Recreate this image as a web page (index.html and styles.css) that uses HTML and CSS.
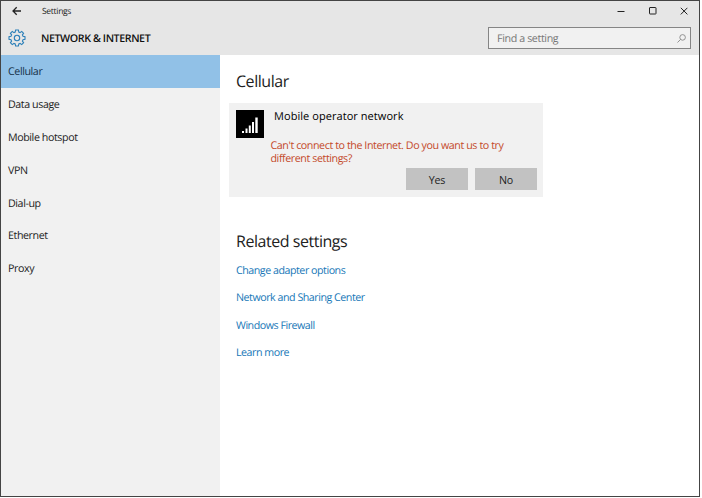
FILE: index.html
```html
<!DOCTYPE html>
<html lang="en">
<head>
<meta charset="utf-8">
<title>Settings</title>
<link rel="stylesheet" href="styles.css">
</head>
<body>
<div class="window">
  <header class="header">
    <div class="titlebar">
      <svg class="back" width="10" height="10" viewBox="0 0 10 10"><path d="M9 5H1M4.700 1.200L1 5l3.700 3.800"/></svg>
      <span class="app-name">Settings</span>
      <div class="controls">
        <svg width="8" height="8" viewBox="0 0 8 8"><path d="M.5 4.500h7"/></svg>
        <svg width="8" height="8" viewBox="0 0 8 8"><rect x=".5" y=".5" width="6.500" height="6.500" rx=".5"/></svg>
        <svg width="8" height="8" viewBox="0 0 8 8"><path d="M.8.8l6.600 6.600M7.400.8L.8 7.400"/></svg>
      </div>
    </div>
    <div class="heading">
      <svg class="gear" width="18" height="18" viewBox="-9 -9 18 18"><path d="M-1.4-8H1.4L1.8-6 3.1-5.4 4.7-6.6 6.6-4.7 5.4-3.1 6-1.8 8-1.4V1.4L6 1.8 5.4 3.1 6.6 4.7 4.7 6.6 3.1 5.4 1.8 6 1.4 8H-1.4L-1.8 6-3.1 5.4-4.7 6.6-6.6 4.7-5.4 3.1-6 1.8-8 1.4V-1.4L-6-1.8-5.4-3.1-6.6-4.7-4.7-6.6-3.1-5.4-1.8-6Z"/><circle r="2.7"/></svg>
      <h1>NETWORK &amp; INTERNET</h1>
      <div class="search">
        <span>Find a setting</span>
        <svg width="9" height="9" viewBox="0 0 9 9"><circle cx="5.6" cy="3.4" r="2.8"/><path d="M3.600 5.400L.5 8.500"/></svg>
      </div>
    </div>
  </header>
  <div class="body">
    <nav class="sidebar">
      <a class="item selected">Cellular</a>
      <a class="item">Data usage</a>
      <a class="item">Mobile hotspot</a>
      <a class="item">VPN</a>
      <a class="item">Dial-up</a>
      <a class="item">Ethernet</a>
      <a class="item">Proxy</a>
    </nav>
    <main class="content">
      <h2>Cellular</h2>
      <section class="card">
        <svg class="signal" width="28" height="28" viewBox="0 0 28 28"><rect width="28" height="28"/><path d="M6 21h2v2H6zM9.500 18.500h2V23h-2zM12.800 15.500h2V23h-2zM16 12h2v11h-2zM19.300 7.500h2.400V23h-2.400z"/></svg>
        <div class="info">
          <div class="network">Mobile operator network</div>
          <p class="warning">Can't connect to the Internet. Do you want us to try<br>different settings?</p>
          <div class="buttons"><button>Yes</button><button>No</button></div>
        </div>
      </section>
      <h2 class="related">Related settings</h2>
      <div class="links">
        <a>Change adapter options</a>
        <a>Network and Sharing Center</a>
        <a>Windows Firewall</a>
        <a>Learn more</a>
      </div>
    </main>
  </div>
</div>
</body>
</html>
```
FILE: styles.css
```css
* { box-sizing: border-box; }
body { margin: 0; background: #fff; font-family: "Open Sans", "Noto Sans", sans-serif; font-size: 10.700px; letter-spacing: -.45px; color: #222; text-rendering: geometricPrecision; }
svg { flex: none; fill: none; stroke: #222; }
h1, h2, p { margin: 0; }
.window { width: 700px; height: 497px; border: 1px solid #444; display: flex; flex-direction: column; background: #fff; }
.header { height: 54px; flex: none; background: #e6e6e6; }
.titlebar { height: 20px; display: flex; align-items: center; padding: 0 11px; }
.back { stroke-width: 1.3; }
.app-name { font-size: 8.500px; letter-spacing: -.3px; line-height: 12px; margin: 2px 0 0 20px; }
.controls { display: flex; gap: 23.500px; margin-left: auto; }
.heading { height: 34px; display: flex; align-items: center; padding: 0 8px 0 7px; }
.gear { stroke: #2b7fb8; stroke-width: 1.1; }
h1 { margin: 2px 0 0 15px; font-size: 10.700px; font-weight: 600; line-height: 16px; letter-spacing: -.42px; color: #111; }
.search { width: 203px; height: 22px; margin-left: auto; border: 1px solid #858585; background: #f1f1f1; display: flex; align-items: center; justify-content: space-between; padding: 0 4px 0 8px; color: #777; }
.search span { line-height: 18px; margin-top: 1px; letter-spacing: -.38px; }
.search svg { stroke: #888; stroke-width: .9; }
.body { display: flex; flex: 1; min-height: 0; }
.sidebar { width: 219px; flex: none; background: #f1f1f1; display: flex; flex-direction: column; }
.item { height: 32.900px; line-height: 35px; padding-left: 7px; flex: none; letter-spacing: -.42px; }
.selected { background: #91c1e7; color: #17324a; }
.content { flex: 1; padding: 16px 0 0 9px; }
h2 { margin-left: 7px; font-size: 16px; line-height: 20px; font-weight: 400; letter-spacing: -.46px; color: #222; }
.card { width: 314px; height: 94px; margin-top: 12px; padding: 7px 6px 7px 7px; background: #f1f1f1; display: flex; }
.signal rect { fill: #000; stroke: none; }
.signal path { fill: #fff; stroke: none; }
.info { flex: 1; padding-left: 6.500px; }
.network { margin-left: 3.500px; font-size: 11px; letter-spacing: .06px; line-height: 13px; color: #000; }
.warning { margin-top: 17px; line-height: 13px; letter-spacing: -.42px; color: #c4492a; white-space: nowrap; }
.buttons { display: flex; justify-content: flex-end; gap: 7px; margin-top: 2px; }
button { width: 62px; height: 22px; border: 0; padding: 2px 0 0; background: #c2c2c2; font: inherit; letter-spacing: -.2px; color: #222; }
.related { margin-top: 34px; }
.links { margin: 6px 0 0 7px; display: flex; flex-direction: column; }
.links a { height: 27.400px; line-height: 29px; letter-spacing: -.48px; color: #1777b7; }
```
